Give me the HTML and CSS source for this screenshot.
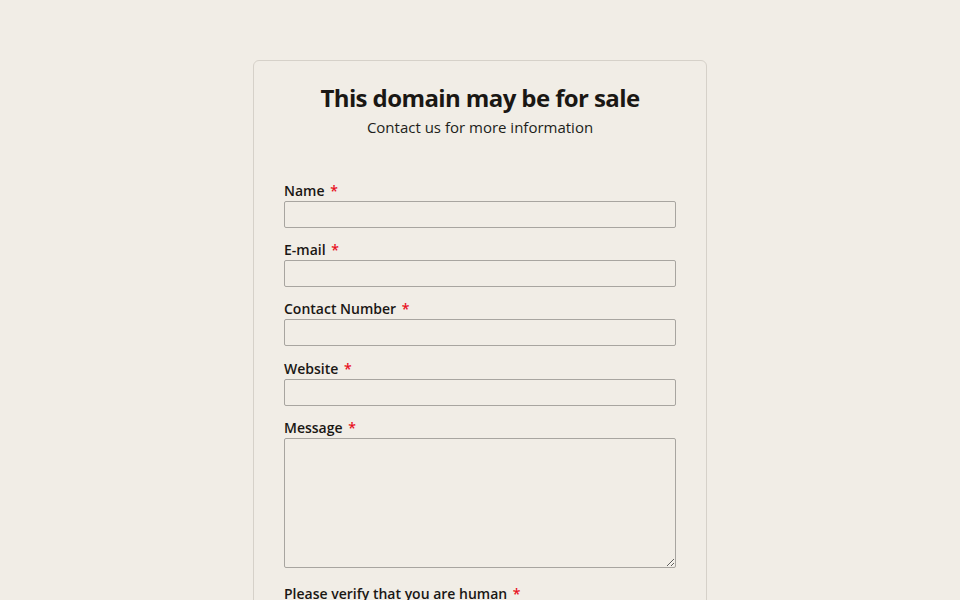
FILE: index.html
```html
<!DOCTYPE html>
<html lang="en">
<head>
<meta charset="utf-8">
<title>This domain may be for sale</title>
<link rel="stylesheet" href="styles.css">
</head>
<body>
<div class="card">
  <h1 class="title">This domain may be for sale</h1>
  <p class="subtitle">Contact us for more information</p>
  <form class="form">
    <div class="field">
      <label class="label">Name <span class="req">*</span></label>
      <input class="input" type="text">
    </div>
    <div class="field">
      <label class="label">E-mail <span class="req">*</span></label>
      <input class="input" type="text">
    </div>
    <div class="field">
      <label class="label">Contact Number <span class="req">*</span></label>
      <input class="input" type="text">
    </div>
    <div class="field field-wide">
      <label class="label">Website <span class="req">*</span></label>
      <input class="input" type="text">
    </div>
    <div class="field">
      <label class="label">Message <span class="req">*</span></label>
      <textarea class="input textarea"></textarea>
    </div>
    <div class="field">
      <label class="label">Please verify that you are human <span class="req">*</span></label>
    </div>
  </form>
</div>
</body>
</html>
```
FILE: styles.css
```css
html, body {
  margin: 0;
  padding: 0;
  background: #f1ede6;
  font-family: "Open Sans", "Noto Sans", sans-serif;
  color: #1a1714;
}
.card {
  width: 392px;
  margin: 60px auto 0;
  padding: 21px 30px 40px;
  border: 1px solid #d6d1c9;
  border-radius: 6px;
}
.title {
  margin: 0;
  text-align: center;
  font-size: 24px;
  font-weight: 700;
  line-height: 32px;
  letter-spacing: -0.6px;
}
.subtitle {
  margin: 2px 0 0;
  text-align: center;
  font-size: 15px;
  line-height: 22px;
  color: #211e1a;
}
.form {
  margin-top: 43px;
  display: flex;
  flex-direction: column;
  gap: 12px;
}
.field {
  display: flex;
  flex-direction: column;
}
.field-wide {
  margin-top: 1px;
}
.label {
  font-size: 14px;
  font-weight: 600;
  line-height: 20px;
}
.req {
  color: #e8101e;
  margin-left: 2px;
}
.input {
  box-sizing: border-box;
  width: 392px;
  height: 27px;
  margin: 0;
  border: 1px solid #a8a5a0;
  border-radius: 2px;
  background: #f1ede6;
  font: inherit;
}
.textarea {
  height: 130px;
  margin-bottom: 4px;
  resize: vertical;
}
```
